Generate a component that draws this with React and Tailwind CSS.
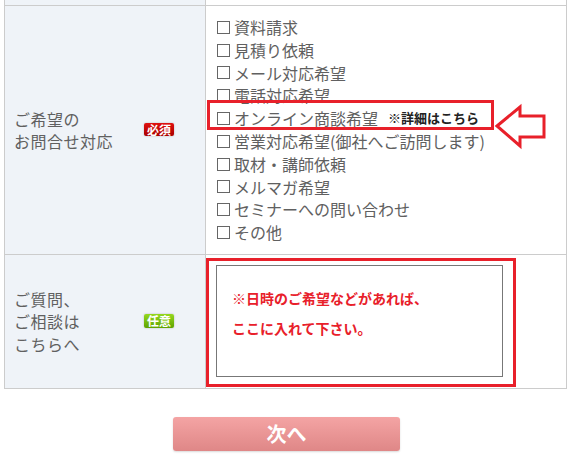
const options = [
  '資料請求',
  '見積り依頼',
  'メール対応希望',
  '電話対応希望',
  'オンライン商談希望',
  '営業対応希望(御社へご訪問します)',
  '取材・講師依頼',
  'メルマガ希望',
  'セミナーへの問い合わせ',
  'その他',
];

const Badge = ({ kind }) =>
  kind === 'required' ? (
    <span className="inline-flex items-center justify-center w-[30px] h-[13px] rounded-[2px] bg-gradient-to-b from-[#e01010] to-[#a80000] text-white text-[12px] font-bold leading-none shadow-[0_0_2px_rgba(0,0,0,0.25)]">
      必須
    </span>
  ) : (
    <span className="inline-flex items-center justify-center w-[30px] h-[14px] rounded-[2px] bg-gradient-to-b from-[#95d81e] to-[#5ea300] text-white text-[12px] font-bold leading-none shadow-[0_0_2px_rgba(0,0,0,0.25)]">
      任意
    </span>
  );

const App = () => {
  return (
    <div className="w-[573px] h-[460px] bg-white font-['Noto_Sans_CJK_JP','Noto_Sans',sans-serif] text-[#606060]">
      {/* Form table */}
      <div className="ml-[4px] w-[563px] border-l border-r border-[#ccc]">
        {/* previous row (cut off) */}
        <div className="flex h-[6px] border-b border-[#ccc]">
          <div className="w-[201px] shrink-0 bg-[#eff3f8] border-r border-[#ccc]"></div>
          <div className="flex-1"></div>
        </div>

        {/* Inquiry type */}
        <div className="flex border-b border-[#ccc]">
          <div className="w-[201px] shrink-0 bg-[#eff3f8] border-r border-[#ccc] flex items-center pl-[9px]">
            <div className="w-[130px] text-[16px] leading-[22px] tracking-[0.5px]">
              <div>ご希望の</div>
              <div>お問合せ対応</div>
            </div>
            <Badge kind="required" />
          </div>
          <div className="relative flex-1 pt-[10px] pb-[10px] pl-[11px]">
            {options.map((label, i) => (
              <div key={i} className="flex items-center text-[16px] leading-[22.8px] whitespace-nowrap">
                <span className="inline-block w-[13px] h-[13px] border border-[#666] mr-[4px] shrink-0"></span>
                <span>{label}</span>
                {i === 4 && (
                  <span className="ml-[10px] text-[13px] font-bold text-[#222]">※詳細はこちら</span>
                )}
              </div>
            ))}

            {/* highlight overlay */}
            <div className="absolute left-[1px] top-[94px] w-[287px] h-[30px] border-[3px] border-[#e8202a]"></div>
            <svg className="absolute left-[284px] top-[96px]" width="58" height="48" viewBox="0 0 58 48">
              <polygon
                points="7,24 30,5 30,14 54,14 54,35 30,35 30,44"
                fill="#fff"
                stroke="#e8202a"
                strokeWidth="3"
                strokeLinejoin="miter"
              />
            </svg>
          </div>
        </div>

        {/* Questions */}
        <div className="flex border-b border-[#ccc]">
          <div className="w-[201px] shrink-0 bg-[#eff3f8] border-r border-[#ccc] flex items-center pl-[9px]">
            <div className="w-[130px] text-[16px] leading-[22.5px] tracking-[0.5px]">
              <div>ご質問、</div>
              <div>ご相談は</div>
              <div>こちらへ</div>
            </div>
            <Badge kind="optional" />
          </div>
          <div className="flex-1 pt-[3px] pb-[1px]">
            <div className="w-[310px] h-[129px] border-[3px] border-[#e8202a] pl-[7px] pt-[4px]">
              <div className="w-[287px] h-[112px] border border-[#777] pl-[15px] pt-[17px] text-[14px] font-bold leading-[30px] text-[#e8202a]">
                <div>※日時のご希望などがあれば、</div>
                <div>ここに入れて下さい。</div>
              </div>
            </div>
          </div>
        </div>
      </div>

      {/* Next button */}
      <div className="flex justify-center mt-[28px]">
        <button className="w-[227px] h-[34px] rounded-[3px] bg-gradient-to-b from-[#f4a4a4] to-[#df8787] text-white text-[20px] font-bold leading-none shadow-[0_1px_2px_rgba(0,0,0,0.15)]">
          次へ
        </button>
      </div>
    </div>
  );
};

export default App;
